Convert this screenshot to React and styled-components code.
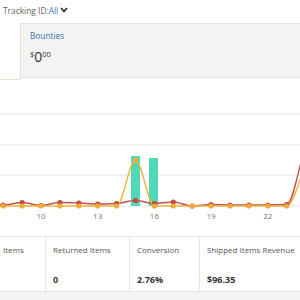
import React from "react";
import styled, { createGlobalStyle } from "styled-components";

const GlobalStyle = createGlobalStyle`
  html, body {
    margin: 0;
    padding: 0;
    background: #ffffff;
    font-family: "Open Sans", "Noto Sans", sans-serif;
  }
`;

const Page = styled.div`
  width: 300px;
  height: 300px;
  overflow: hidden;
  display: flex;
  flex-direction: column;
`;

const Header = styled.div`
  height: 23px;
  display: flex;
  align-items: center;
  padding: 0 0 3px 3px;
  box-sizing: border-box;
  font-size: 8.4px;
  color: #666666;
`;

const TrackingValue = styled.span`
  color: #3b7bbf;
`;

const Chevron = styled.svg`
  margin-left: 2px;
`;

const Tabs = styled.div`
  height: 57px;
  display: flex;
`;

const SelectedTab = styled.div`
  width: 20px;
  background: #ffffff;
  border-right: 1px solid #ebe2cc;
  border-bottom: 1px solid #ebe2cc;
`;

const TabPanel = styled.div`
  flex: 1;
  height: 55px;
  box-sizing: border-box;
  background: #f3f3f3;
  border-top: 1px solid #e4e4e4;
  border-bottom: 1px solid #e4e4e4;
  padding: 6px 0 0 9px;
`;

const TabTitle = styled.div`
  font-size: 8.3px;
  line-height: 12px;
  color: #3a72ad;
`;

const Amount = styled.div`
  margin-top: 3px;
  color: #333333;
  font-size: 14px;
  line-height: 19px;
`;

const Sup = styled.sup`
  font-size: 7.5px;
  vertical-align: 5px;
`;

const ChartBox = styled.div`
  height: 156px;
`;

const Stats = styled.div`
  height: 55px;
  display: flex;
  border-top: 1px solid #e8e8e8;
  box-sizing: border-box;
`;

const Cell = styled.div`
  width: ${(p) => p.$w}px;
  flex: ${(p) => (p.$w ? "none" : "1")};
  box-sizing: border-box;
  padding: 7px 0 0 ${(p) => p.$pad}px;
  border-left: ${(p) => (p.$first ? "none" : "1px solid #e6e6e6")};
  display: flex;
  flex-direction: column;
`;

const Label = styled.div`
  font-size: 8px;
  line-height: 12px;
  color: #555555;
  white-space: nowrap;
`;

const Value = styled.div`
  margin-top: 17px;
  font-size: 9px;
  line-height: 14px;
  font-weight: 700;
  color: #333333;
`;

const Footer = styled.div`
  flex: 1;
  background: #f3f3f3;
  border-top: 1px solid #e6e6e6;
`;

const dayX = (d) => 41 + (d - 10) * 18.9;

const red = [
  [7, 204], [8, 205], [9, 202.5], [10, 205.5], [11, 202.5], [12, 203],
  [13, 204], [14, 203.5], [15, 200.5], [16, 203.5], [17, 202], [18, 206],
  [19, 204.5], [20, 205], [21, 205], [22, 205], [23, 204.5], [24, 145],
];

const orange = [
  [7, 206], [8, 206], [9, 206], [10, 206], [11, 206], [12, 206],
  [13, 206], [14, 206], [15, 160], [16, 206], [17, 206], [18, 206],
  [19, 206], [20, 206], [21, 206], [22, 206], [23, 206], [24, 166],
];

function monotonePath(data) {
  const pts = data.map(([d, y]) => [dayX(d), y]);
  const n = pts.length;
  const s = [];
  for (let i = 0; i < n - 1; i++) {
    s.push((pts[i + 1][1] - pts[i][1]) / (pts[i + 1][0] - pts[i][0]));
  }
  const t = pts.map((_, i) => {
    if (i === 0) return s[0];
    if (i === n - 1) return s[n - 2];
    const a = s[i - 1];
    const b = s[i];
    if (a * b <= 0) return 0;
    return 2 / (1 / a + 1 / b);
  });
  let d = `M${pts[0][0]},${pts[0][1]}`;
  for (let i = 0; i < n - 1; i++) {
    const h = (pts[i + 1][0] - pts[i][0]) / 3;
    d += ` C${pts[i][0] + h},${pts[i][1] + t[i] * h} ${pts[i + 1][0] - h},${
      pts[i + 1][1] - t[i + 1] * h
    } ${pts[i + 1][0]},${pts[i + 1][1]}`;
  }
  return d;
}

const Chart = () => (
  <svg width="300" height="156" viewBox="0 80 300 156">
    {[114, 145, 175, 206].map((y) => (
      <line key={y} x1="0" x2="300" y1={y} y2={y} stroke="#e7e7e7" strokeWidth="1" />
    ))}
    <rect x="131" y="156" width="9" height="50" fill="#4fd9b6" />
    <rect x="149" y="158" width="9" height="48" fill="#4fd9b6" />
    <path d={monotonePath(red)} fill="none" stroke="#c0504d" strokeWidth="1.4" />
    <path d={monotonePath(orange)} fill="none" stroke="#f2b33d" strokeWidth="1.4" />
    {red.map(([d, y]) => (
      <circle key={`r${d}`} cx={dayX(d)} cy={y} r="2.6" fill="#c24a40" />
    ))}
    {orange.map(([d, y]) => (
      <circle key={`o${d}`} cx={dayX(d)} cy={y} r="2.6" fill="#f3ab3a" />
    ))}
    {[10, 13, 16, 19, 22].map((d) => (
      <text
        key={d}
        x={dayX(d)}
        y="219"
        fontSize="8"
        fill="#777777"
        textAnchor="middle"
        fontFamily="Open Sans, sans-serif"
      >
        {d}
      </text>
    ))}
  </svg>
);

const stats = [
  { label: "Items", value: "", w: 45, pad: 3, first: true },
  { label: "Returned Items", value: "0", w: 84, pad: 7 },
  { label: "Conversion", value: "2.76%", w: 70, pad: 7 },
  { label: "Shipped Items Revenue", value: "$96.35", pad: 7 },
];

export default function App() {
  return (
    <Page>
      <GlobalStyle />
      <Header>
        Tracking ID:<TrackingValue>All</TrackingValue>
        <Chevron width="8" height="6" viewBox="0 0 8 6">
          <path d="M1 1 L4 4.5 L7 1" fill="none" stroke="#222" strokeWidth="1.5" />
        </Chevron>
      </Header>
      <Tabs>
        <SelectedTab />
        <TabPanel>
          <TabTitle>Bounties</TabTitle>
          <Amount>
            <Sup>$</Sup>0<Sup>00</Sup>
          </Amount>
        </TabPanel>
      </Tabs>
      <ChartBox>
        <Chart />
      </ChartBox>
      <Stats>
        {stats.map((s) => (
          <Cell key={s.label} $w={s.w} $pad={s.pad} $first={s.first}>
            <Label>{s.label}</Label>
            <Value>{s.value || "\u00a0"}</Value>
          </Cell>
        ))}
      </Stats>
      <Footer />
    </Page>
  );
}
